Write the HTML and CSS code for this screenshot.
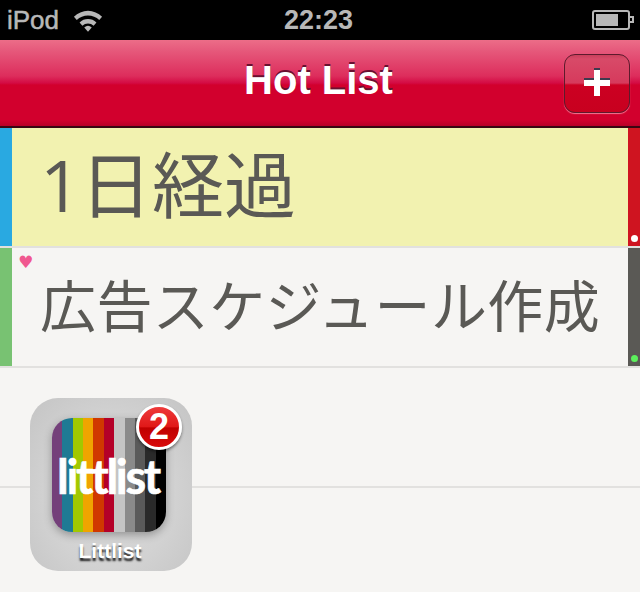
FILE: index.html
```html
<!DOCTYPE html>
<html lang="ja">
<head>
    <meta charset="UTF-8">
    <meta name="viewport" content="width=device-width, initial-scale=1.0">
    <title>Hot List</title>
    <link rel="stylesheet" href="styles.css">
</head>
<body>
    <div class="status-bar">
        <div class="status-left">
            <span class="carrier">iPod</span>
            <svg class="wifi" width="30" height="23" viewBox="0 0 32 24">
                <path d="M1 8 A21 21 0 0 1 31 8 L28 11.5 A17 17 0 0 0 4 11.5 Z" fill="#b8b8b8"/>
                <path d="M7 14 A13 13 0 0 1 25 14 L22 17.5 A9 9 0 0 0 10 17.5 Z" fill="#b8b8b8"/>
                <path d="M12 19.5 A6 6 0 0 1 20 19.5 L16 24 Z" fill="#b8b8b8"/>
            </svg>
        </div>
        <span class="clock">22:23</span>
        <div class="battery"><div class="battery-fill"></div></div>
    </div>

    <div class="nav-bar">
        <h1>Hot List</h1>
        <div class="add-button"><span class="plus"></span></div>
    </div>

    <div class="row row-yellow">
        <div class="tag tag-blue"></div>
        <div class="row-text large"><span class="digit">1</span>日経過</div>
        <div class="side side-red"><span class="dot dot-white"></span></div>
    </div>
    <div class="row">
        <div class="tag tag-green"></div>
        <span class="heart">&#9829;</span>
        <div class="row-text">広告スケジュール作成</div>
        <div class="side side-gray"><span class="dot dot-green"></span></div>
    </div>
    <div class="row row-empty"></div>

    <div class="app-tile">
        <div class="app-icon">
            <i class="s1"></i><i class="s2"></i><i class="s3"></i><i class="s4"></i><i class="s5"></i><i class="s6"></i>
            <i class="s7"></i><i class="s8"></i><i class="s9"></i><i class="s10"></i><i class="s11"></i>
            <span class="logo">littlist</span>
        </div>
        <div class="app-label">Littlist</div>
        <div class="badge">2</div>
    </div>
</body>
</html>
```

FILE: styles.css
```css
html, body {
    margin: 0;
    padding: 0;
}

body {
    position: relative;
    height: 592px;
    overflow: hidden;
    background: #f6f5f3;
    font-family: "Liberation Sans", Arial, sans-serif;
}

.status-bar {
    height: 40px;
    background: #000;
    color: #b8b8b8;
    font-size: 27px;
    display: flex;
    align-items: center;
    justify-content: space-between;
    padding: 0 10px 0 7px;
    position: relative;
}

.status-left {
    display: flex;
    align-items: center;
    gap: 14px;
}

.carrier {
    font-size: 26px;
    -webkit-text-stroke: 0.5px #b8b8b8;
}

.wifi {
    margin-top: 1px;
}

.clock {
    position: absolute;
    left: 284px;
    font-weight: bold;
}

.battery {
    width: 30px;
    height: 12px;
    border: 2px solid #b8b8b8;
    border-radius: 3px;
    padding: 2px;
    position: relative;
}

.battery::after {
    content: "";
    position: absolute;
    right: -6px;
    top: 4px;
    width: 2px;
    height: 3px;
    border: 2px solid #b8b8b8;
    border-left: none;
}

.battery-fill {
    width: 22px;
    height: 100%;
    background: #b8b8b8;
}

.nav-bar {
    height: 88px;
    box-sizing: border-box;
    border-bottom: 2px solid #3a0612;
    background: linear-gradient(to bottom, #ec6d88 0, #e65a7c 10px, #dd2d5c 36px, #d40b44 43px, #d2002d 45px, #d2002d 80px, #b80027 86px);
    display: flex;
    align-items: center;
    justify-content: center;
    position: relative;
}

h1 {
    margin: 0 3px 5px 0;
    color: #fff;
    font-size: 40px;
    font-weight: bold;
    text-shadow: 0 -2px 0 #6a1030;
}

.add-button {
    position: absolute;
    left: 564px;
    top: 14px;
    width: 66px;
    height: 59px;
    box-sizing: border-box;
    border: 1px solid #5e1a2c;
    border-radius: 11px;
    background: linear-gradient(to bottom, #c8405c 0, #d84a68 4px, #d63a5c 28px, #cc0022 30px, #c8001f 100%);
    box-shadow: 0 1px 1px rgba(255, 170, 190, 0.7);
}

.plus {
    position: absolute;
    left: 19px;
    top: 13px;
    width: 26px;
    height: 28px;
    background:
        linear-gradient(#fff, #fff) 10px 2px / 6px 26px no-repeat,
        linear-gradient(#fff, #fff) 0 12px / 26px 6px no-repeat,
        linear-gradient(#3e3a4e, #3e3a4e) 10px 0 / 6px 2px no-repeat,
        linear-gradient(#3e3a4e, #3e3a4e) 0 10px / 26px 2px no-repeat;
}

.row {
    height: 118px;
    border-bottom: 2px solid #e2e1df;
    display: flex;
    position: relative;
    color: #5a5955;
}

.row-yellow {
    background: #f2f2b0;
}

.row-empty {
    height: 118px;
}

.tag {
    width: 12px;
    flex: none;
}

.tag-blue {
    background: #29a9e1;
}

.tag-green {
    background: #78c272;
}

.row-text {
    flex: 1;
    padding-left: 28px;
    font-family: "Noto Sans CJK JP", "Liberation Sans", sans-serif;
    font-size: 56px;
    letter-spacing: 0.4px;
    line-height: 110px;
    white-space: nowrap;
}

.row-text.large {
    font-size: 72px;
    letter-spacing: 0;
    line-height: 106px;
}

.digit {
    display: inline-block;
    width: 40px;
    font-family: "Open Sans", sans-serif;
    line-height: 1;
}

.side {
    width: 12px;
    flex: none;
    position: relative;
}

.side-red {
    background: #cf1420;
}

.side-gray {
    background: #5a5955;
}

.dot {
    position: absolute;
    left: 3px;
    bottom: 4px;
    width: 7px;
    height: 7px;
    border-radius: 50%;
}

.dot-white {
    background: #fff;
}

.dot-green {
    background: #5cf05c;
}

.heart {
    position: absolute;
    left: 18px;
    top: 4px;
    color: #f0588f;
    font-family: "DejaVu Sans", sans-serif;
    font-size: 17px;
}

/* floats over the rows, like a home screen clip */
.app-tile {
    position: absolute;
    left: 30px;
    top: 398px;
    width: 162px;
    height: 173px;
    border-radius: 28px;
    background: radial-gradient(ellipse at 50% 55%, #d8d8d8 0, #d2d2d2 55%, #c4c4c4 100%);
}

.app-icon {
    position: absolute;
    left: 22px;
    top: 20px;
    width: 114px;
    height: 114px;
    border-radius: 20px;
    overflow: hidden;
    display: flex;
    box-shadow: 0 3px 8px rgba(0, 0, 0, 0.3);
}

.app-icon i {
    display: block;
    flex: 1;
}

.s1 { background: #74407a; }
.s2 { background: #1f7a94; }
.s3 { background: #a2c800; }
.s4 { background: #f0a400; }
.s5 { background: #d03800; }
.s6 { background: #b40028; }
.s7 { background: #c4c4c4; }
.s8 { background: #8a8a8a; }
.s9 { background: #5a5a5a; }
.s10 { background: #2a2a2a; }
.s11 { background: #000; }

.logo {
    position: absolute;
    left: 5px;
    top: 33px;
    color: #fff;
    font-family: "Lato", sans-serif;
    font-size: 47px;
    font-weight: bold;
    letter-spacing: -2.3px;
    line-height: 50px;
    -webkit-text-stroke: 0.6px #fff;
}

.app-label {
    position: absolute;
    left: -2px;
    right: 0;
    top: 141px;
    text-align: center;
    color: #fff;
    font-size: 21px;
    font-weight: bold;
    text-shadow: 0 3px 2px rgba(0, 0, 0, 0.85);
}

.badge {
    position: absolute;
    left: 106px;
    top: 6px;
    width: 40px;
    height: 40px;
    border: 3px solid #fff;
    border-radius: 50%;
    background: linear-gradient(to bottom, #ee3a3a 0, #e01818 50%, #c00000 52%, #d80a0a 100%);
    box-shadow: 0 2px 3px rgba(0, 0, 0, 0.45);
    color: #fff;
    font-size: 36px;
    font-weight: bold;
    line-height: 40px;
    text-align: center;
}
```
